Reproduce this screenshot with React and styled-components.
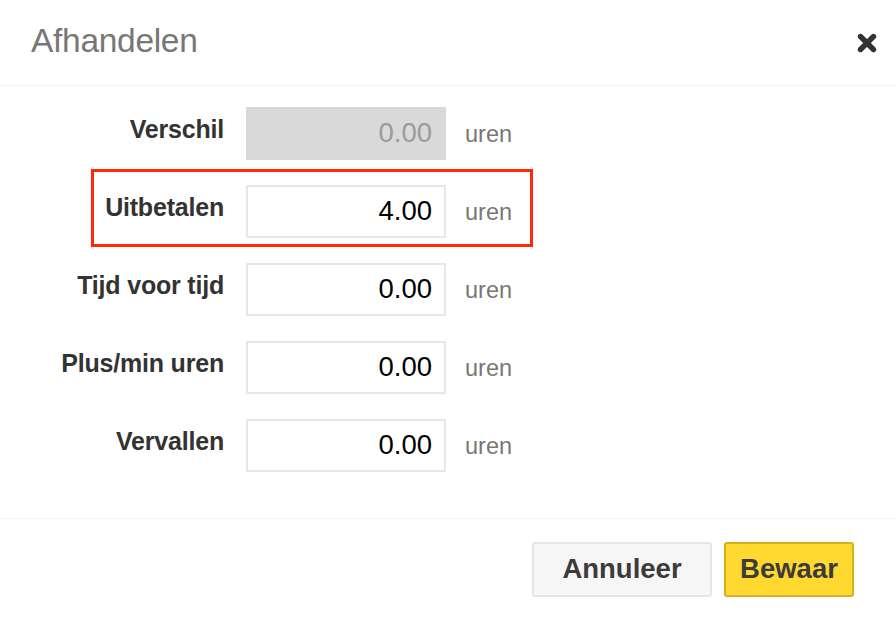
import React from "react";
import styled, { createGlobalStyle } from "styled-components";

const Global = createGlobalStyle`
  html, body { margin: 0; padding: 0; background: #fff; }
  body { font-family: "Liberation Sans", Arial, Helvetica, sans-serif; }
  *, *::before, *::after { box-sizing: border-box; }
`;

const Modal = styled.div`
  width: 896px;
  height: 628px;
  background: #fff;
  display: flex;
  flex-direction: column;
`;

const Header = styled.div`
  height: 86px;
  display: flex;
  align-items: center;
  justify-content: space-between;
  padding: 0 19px 4px 31px;
  border-bottom: 1px solid #f3f3f3;
`;

const Title = styled.h1`
  margin: 0;
  font-size: 33.5px;
  font-weight: normal;
  color: #777;
  letter-spacing: -0.3px;
`;

const Close = styled.button`
  border: 0;
  background: none;
  padding: 0;
  width: 20px;
  height: 20px;
  display: flex;
  align-items: center;
  justify-content: center;
  margin-top: 4px;
  cursor: pointer;
`;

const Body = styled.div`
  flex: 1;
  padding: 21px 0 0;
  display: flex;
  flex-direction: column;
  gap: 25px;
`;

const Row = styled.div`
  position: relative;
  display: flex;
  align-items: center;
  height: 53px;
  ${(p) =>
    p.$highlight &&
    `
    &::before {
      content: "";
      position: absolute;
      left: 91px;
      top: -16px;
      width: 442px;
      height: 78px;
      border: 3px solid #ff2a0a;
      pointer-events: none;
    }
  `}
`;

const Label = styled.label`
  width: 224px;
  text-align: right;
  font-weight: bold;
  font-size: 25px;
  color: #333;
  margin-top: -8px;
  letter-spacing: -0.2px;
`;

const Input = styled.input`
  margin-left: 22px;
  width: 200px;
  height: 53px;
  border: 2px solid ${(p) => (p.disabled ? "#d9d9d9" : "#ebe6e6")};
  background: ${(p) => (p.disabled ? "#d9d9d9" : "#fff")};
  color: ${(p) => (p.disabled ? "#9b9b9b" : "#000")};
  font-family: "Liberation Sans", Arial, Helvetica, sans-serif;
  font-size: 27.5px;
  text-align: right;
  padding: 0 12px 2px;
  outline: none;
  -webkit-text-fill-color: ${(p) => (p.disabled ? "#9b9b9b" : "#000")};
  opacity: 1;
`;

const Unit = styled.span`
  margin-left: 19px;
  font-size: 23.5px;
  color: #777;
  margin-top: 2px;
`;

const Footer = styled.div`
  height: 110px;
  border-top: 1px solid #f3f3f3;
  display: flex;
  align-items: flex-start;
  justify-content: flex-end;
  gap: 12px;
  padding: 23px 42px 0 0;
`;

const Button = styled.button`
  width: ${(p) => p.$w}px;
  height: 55px;
  border-radius: 3px;
  font-family: "Liberation Sans", Arial, Helvetica, sans-serif;
  font-weight: bold;
  font-size: 27.5px;
  color: #3d3a3a;
  border: 2px solid ${(p) => (p.$primary ? "#d4b023" : "#e7e6e6")};
  background: ${(p) => (p.$primary ? "#ffd92f" : "#f7f6f7")};
  padding: 0 0 2px;
  cursor: pointer;
`;

const rows = [
  { label: "Verschil", value: "0.00", disabled: true },
  { label: "Uitbetalen", value: "4.00", highlight: true },
  { label: "Tijd voor tijd", value: "0.00" },
  { label: "Plus/min uren", value: "0.00" },
  { label: "Vervallen", value: "0.00" },
];

export default function App() {
  return (
    <Modal>
      <Global />
      <Header>
        <Title>Afhandelen</Title>
        <Close aria-label="Sluiten">
          <svg width="20" height="20" viewBox="0 0 20 20">
            <path
              d="M3.5 3.5 L16.5 16.5 M16.5 3.5 L3.5 16.5"
              stroke="#333"
              strokeWidth="5.4"
              strokeLinecap="round"
            />
          </svg>
        </Close>
      </Header>
      <Body>
        {rows.map((r) => (
          <Row key={r.label} $highlight={r.highlight}>
            <Label>{r.label}</Label>
            <Input defaultValue={r.value} disabled={r.disabled} readOnly />
            <Unit>uren</Unit>
          </Row>
        ))}
      </Body>
      <Footer>
        <Button $w={180}>Annuleer</Button>
        <Button $w={130} $primary>
          Bewaar
        </Button>
      </Footer>
    </Modal>
  );
}
